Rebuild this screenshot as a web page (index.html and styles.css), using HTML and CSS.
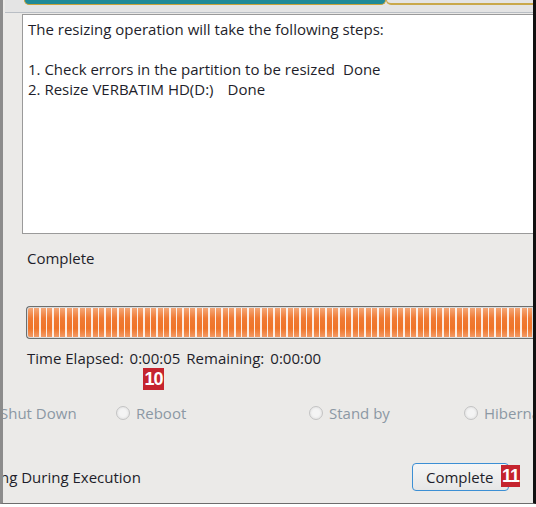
FILE: index.html
```html
<!DOCTYPE html>
<html lang="en">
<head>
  <meta charset="UTF-8">
  <title>Resize Partition - Progress</title>
  <link rel="stylesheet" href="styles.css">
</head>
<body>

<div class="window">
  <div class="tabstrip">
    <div class="tab"></div>
    <div class="tab-rest"></div>
  </div>

  <div class="log">
    <p>The resizing operation will take the following steps:</p>
    <p class="blank">&nbsp;</p>
    <p>1. Check errors in the partition to be resized<span class="gap"></span>Done</p>
    <p>2. Resize VERBATIM HD(D:)<span class="gap wide"></span>Done</p>
  </div>

  <div class="status">Complete</div>

  <div class="progress">
    <div class="progress-fill"></div>
  </div>

  <div class="times">
    <span>Time Elapsed:</span><span class="val">0:00:05</span>
    <span>Remaining:</span><span class="val">0:00:00</span>
    <span class="badge badge-10">10</span>
  </div>

  <div class="radios">
    <label class="radio first">Shut Down</label>
    <label class="radio"><span class="circle"></span>Reboot</label>
    <label class="radio"><span class="circle"></span>Stand by</label>
    <label class="radio"><span class="circle"></span>Hibernate</label>
  </div>

  <div class="footer">
    <span class="check-label">ng During Execution</span>
    <div class="btn-wrap">
      <button class="btn">Complete</button>
      <span class="badge badge-11">11</span>
    </div>
  </div>
</div>

</body>
</html>
```

FILE: styles.css
```css
* {
  box-sizing: border-box;
}

body {
  margin: 0;
  background: #fff;
  font-family: 'Open Sans', 'Noto Sans', sans-serif;
  font-size: 15px;
  color: #1e1e2a;
}

.window {
  width: 536px;
  height: 504px;
  padding-left: 2px;
  background: #ebeae8;
  border-left: 3px solid #8c8c8c;
  border-right: 3px solid #111;
  border-bottom: 1px solid #6d6d6d;
  overflow: hidden;
  position: relative;
}

/* top tab remnants */
.tabstrip {
  display: flex;
  height: 13px;
  border-bottom: 1px solid #b9bec4;
  background: #e4e4e4;
}

.tab {
  margin-left: 19px;
  width: 362px;
  height: 5px;
  background: #1f8a97;
  border: 1px solid #c9a33a;
  border-top: none;
  border-radius: 0 0 8px 8px;
}

.tab-rest {
  flex: 1;
  height: 5px;
  border-bottom: 2px solid #c9a84b;
  border-left: 1px solid #c9a84b;
  border-radius: 0 0 0 6px;
}

.log {
  margin: 1px 0 0 17px;
  height: 220px;
  background: #fff;
  border: 1px solid #9a9a9a;
  border-right: none;
  padding: 4px 5px;
}

.log p {
  margin: 0;
  line-height: 20px;
}

.gap {
  display: inline-block;
  width: 8px;
}

.gap.wide {
  width: 14px;
}

.status {
  margin: 14px 0 0 22px;
  line-height: 20px;
}

.progress {
  margin: 38px 0 0 21px;
  height: 33px;
  border: 1px solid #6a6e6e;
  border-right: none;
  border-radius: 4px 0 0 4px;
  padding: 1px;
  background: #dcdcdc;
}

.progress-fill {
  height: 100%;
  border-radius: 2px 0 0 2px;
  background:
    repeating-linear-gradient(to right, transparent 0, transparent 5px, rgba(255, 255, 255, 0.85) 5px, rgba(255, 255, 255, 0.85) 6.5px),
    linear-gradient(to bottom, #f5a878 0%, #f07a34 35%, #ef7428 70%, #f39a66 100%);
}

.times {
  position: relative;
  margin: 9px 0 0 22px;
  line-height: 20px;
  display: flex;
  gap: 6px;
}

.badge {
  position: absolute;
  background: #c5242e;
  color: #fff;
  font-family: 'Liberation Sans', Arial, sans-serif;
  font-weight: bold;
  font-size: 18px;
  line-height: 22px;
  text-align: center;
  letter-spacing: -1px;
}

.badge-10 {
  left: 116px;
  top: 20px;
  width: 21px;
}

.radios {
  display: flex;
  margin: 35px 0 0 -5px;
  line-height: 20px;
  color: #8b98a4;
}

.radio {
  flex: none;
  display: flex;
  align-items: center;
  gap: 6px;
  white-space: nowrap;
}

.radio.first {
  width: 116px;
}

.radio:nth-child(2) {
  width: 193px;
}

.radio:nth-child(3) {
  width: 155px;
}

.circle {
  flex: none;
  width: 14px;
  height: 14px;
  border: 1px solid #c4c4c4;
  border-radius: 50%;
  background: radial-gradient(circle, #f4f4f4 40%, #dadada 100%);
}

.footer {
  display: flex;
  align-items: center;
  justify-content: space-between;
  margin: 40px 0 0 -5px;
}

.btn-wrap {
  position: relative;
  margin-right: 24px;
}

.btn {
  width: 97px;
  height: 28px;
  font-family: inherit;
  font-size: 15px;
  color: #1e1e2a;
  background: linear-gradient(to bottom, #f6f6f6, #e6e6e6);
  border: 1px solid #3c8fd4;
  border-radius: 4px;
  text-align: left;
  padding: 0 0 0 13px;
}

.badge-11 {
  left: 89px;
  top: 2px;
  width: 19px;
}
```
